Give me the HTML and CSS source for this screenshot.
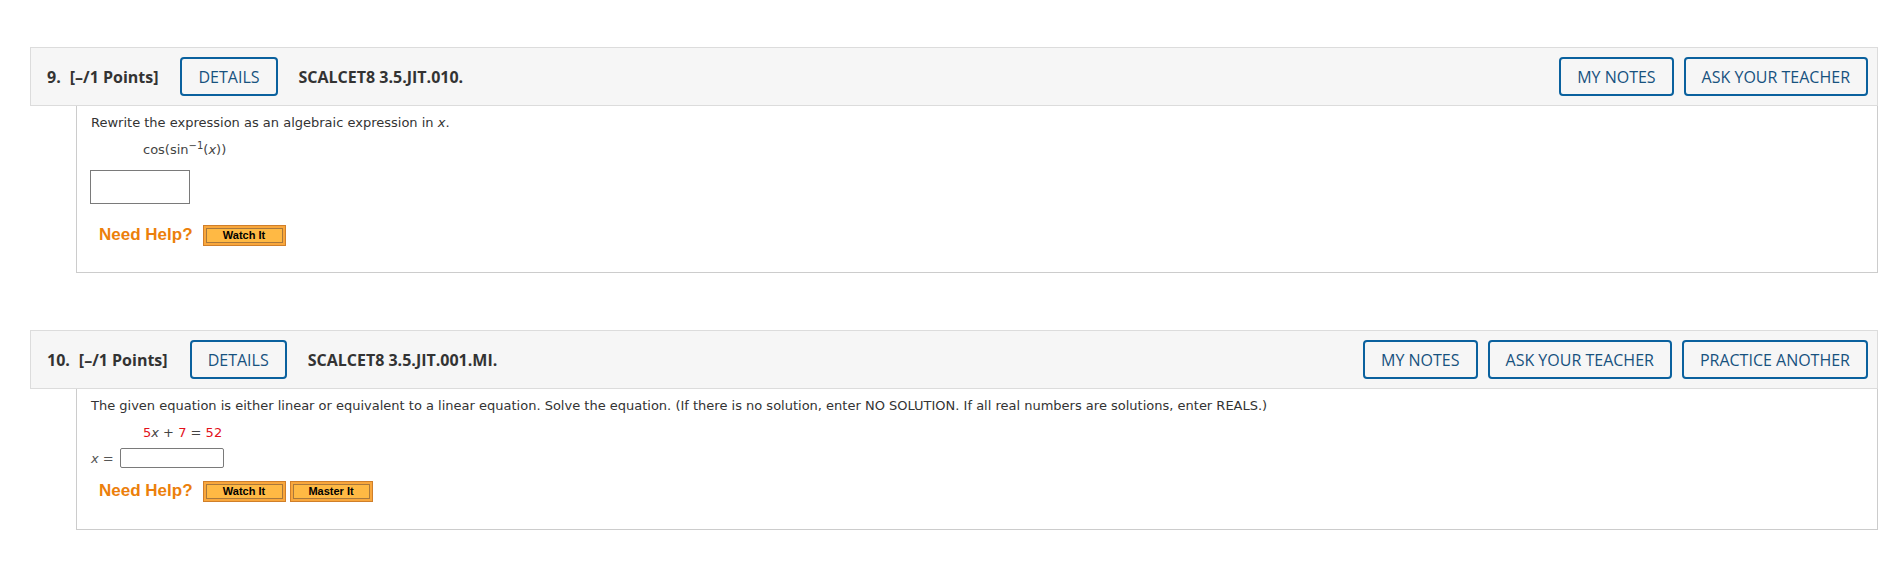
FILE: index.html
```html
<!DOCTYPE html>
<html lang="en">
<head>
<meta charset="utf-8">
<title>Questions</title>
<link rel="stylesheet" href="styles.css">
</head>
<body>
<div class="page">
  <section class="question">
    <div class="qhead">
      <div class="qhead-left">
        <span class="qnum">9.</span>
        <span class="qpts">[–/1 Points]</span>
        <span class="btn btn-details">DETAILS</span>
        <span class="qcode">SCALCET8 3.5.JIT.010.</span>
      </div>
      <div class="qhead-right">
        <span class="btn">MY NOTES</span>
        <span class="btn">ASK YOUR TEACHER</span>
      </div>
    </div>
    <div class="qbody qbody-a">
      <p class="prompt">Rewrite the expression as an algebraic expression in <i>x</i>.</p>
      <p class="expr">cos(sin<sup>−1</sup>(<i>x</i>))</p>
      <div class="answer-row"><span class="answer-box answer-tall"></span></div>
      <div class="help">
        <span class="help-label">Need Help?</span>
        <span class="help-btn">Watch It</span>
      </div>
    </div>
  </section>

  <section class="question question-next">
    <div class="qhead">
      <div class="qhead-left">
        <span class="qnum">10.</span>
        <span class="qpts">[–/1 Points]</span>
        <span class="btn btn-details">DETAILS</span>
        <span class="qcode">SCALCET8 3.5.JIT.001.MI.</span>
      </div>
      <div class="qhead-right">
        <span class="btn">MY NOTES</span>
        <span class="btn">ASK YOUR TEACHER</span>
        <span class="btn">PRACTICE ANOTHER</span>
      </div>
    </div>
    <div class="qbody qbody-b">
      <p class="prompt">The given equation is either linear or equivalent to a linear equation. Solve the equation. (If there is no solution, enter NO SOLUTION. If all real numbers are solutions, enter REALS.)</p>
      <p class="expr"><span class="num">5</span><i>x</i> + <span class="num">7</span> = <span class="num">52</span></p>
      <div class="answer-row answer-inline"><span class="var"><i>x</i> =</span><span class="answer-box answer-short"></span></div>
      <div class="help">
        <span class="help-label">Need Help?</span>
        <span class="help-btn">Watch It</span>
        <span class="help-btn">Master It</span>
      </div>
    </div>
  </section>
</div>
</body>
</html>
```

FILE: styles.css
```css
html, body {
  margin: 0;
  padding: 0;
  background: #ffffff;
}

.page {
  padding: 47px 11px 0 30px;
}

.question-next {
  margin-top: 57px;
}

.qhead {
  display: flex;
  align-items: center;
  justify-content: space-between;
  height: 39px;
  padding: 9px 9px 9px 16px;
  background: #f6f6f6;
  border: 1px solid #dcdcdc;
  font-family: "Open Sans", "Noto Sans", sans-serif;
  color: #333333;
}

.qhead-left,
.qhead-right {
  display: flex;
  align-items: center;
}

.qhead-right {
  gap: 10px;
}

.qnum,
.qpts,
.qcode {
  font-weight: 700;
  font-size: 16px;
}

.qnum {
  margin-right: 9px;
}

.qcode {
  margin-left: 21px;
}

.btn {
  display: flex;
  align-items: center;
  box-sizing: border-box;
  height: 39px;
  padding: 0 16px;
  border: 2px solid #0a619e;
  border-radius: 4px;
  font-size: 16px;
  font-weight: 500;
  color: #17527f;
  background: #f6f6f6;
}

.btn-details {
  margin-left: 22px;
}

.qbody {
  margin-left: 46px;
  border: 1px solid #cccccc;
  border-top: none;
  padding: 0 14px;
  font-family: "DejaVu Sans", Verdana, sans-serif;
  font-size: 13px;
  color: #333333;
}

.qbody p {
  margin: 0;
  line-height: 18px;
}

.expr {
  padding-left: 52px;
  color: #444444;
}

.expr sup {
  font-size: 10px;
  line-height: 0;
  vertical-align: 5px;
}

.num {
  color: #e3101a;
}

.qbody i {
  font-style: italic;
}

.answer-row {
  display: flex;
  align-items: center;
}

.answer-box {
  display: block;
  box-sizing: border-box;
  background: #ffffff;
  border: 1px solid #7a7a7a;
}

.answer-tall {
  width: 100px;
  height: 34px;
  margin-left: -1px;
}

.answer-short {
  width: 104px;
  height: 20px;
  border-radius: 2px;
}

.var {
  color: #555555;
  margin-right: 6px;
}

.help {
  display: flex;
  align-items: center;
  height: 22px;
  padding-left: 8px;
}

.help-label {
  font-family: "Liberation Sans", Arial, sans-serif;
  font-weight: 700;
  font-size: 17px;
  color: #ec7f0b;
  margin-right: 10px;
}

.help-btn {
  display: flex;
  align-items: center;
  justify-content: center;
  box-sizing: border-box;
  width: 83px;
  height: 21px;
  margin-right: 4px;
  border: 1px solid #d07f2a;
  background: #ffb944;
  box-shadow: inset 0 0 0 2px #f9a73c, inset 0 0 0 3px #a9783c;
  font-family: "Liberation Sans", Arial, sans-serif;
  font-weight: 700;
  font-size: 11px;
  color: #000000;
}

/* Question 9 vertical rhythm */
.qbody-a {
  padding-top: 8px;
  padding-bottom: 26px;
}
.qbody-a .expr {
  margin-top: 9px;
}
.qbody-a .answer-row {
  margin-top: 11px;
}
.qbody-a .help {
  margin-top: 20px;
}

/* Question 10 vertical rhythm */
.qbody-b {
  padding-top: 8px;
  padding-bottom: 27px;
}
.qbody-b .expr {
  margin-top: 9px;
}
.qbody-b .answer-row {
  margin-top: 6px;
}
.qbody-b .help {
  margin-top: 12px;
}
```
